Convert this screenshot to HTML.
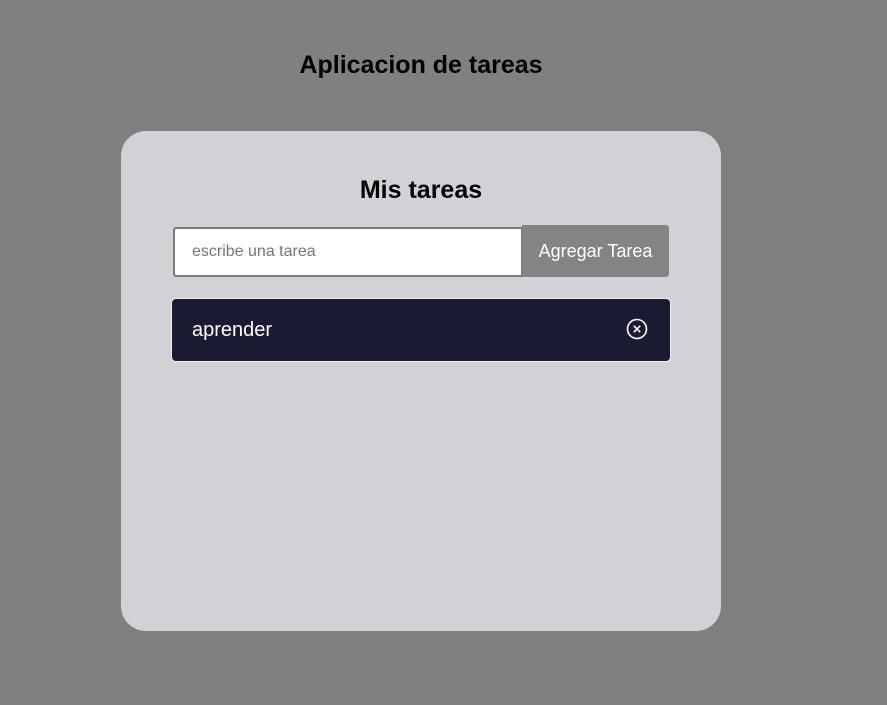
<!DOCTYPE html>
<html><head><meta charset="utf-8"><style>
html,body{margin:0;padding:0;}
body{width:887px;height:705px;background:#808080;font-family:"Liberation Sans",Arial,sans-serif;position:relative;overflow:hidden;}
.t{position:absolute;left:0;width:842px;text-align:center;top:51px;font-size:25px;font-weight:bold;color:#000;margin:0;}
.card{position:absolute;left:121px;top:131px;width:600px;height:500px;background:#d2d1d6;border-radius:25px;}
.h{position:absolute;left:0;width:600px;text-align:center;top:45px;font-size:25px;font-weight:bold;margin:0;}
.inp{position:absolute;left:52px;top:96px;width:346px;height:46px;background:#fff;border:2px solid #7a7a7a;border-radius:3px 0 0 3px;box-sizing:content-box;}
.inp span{position:absolute;left:17px;top:14px;font-size:16px;color:#757575;}
.btn{position:absolute;left:401px;top:94px;width:147px;height:52px;background:#848484;border-radius:0 3px 3px 0;color:#fff;font-size:18px;line-height:52px;text-align:center;}
.task{position:absolute;left:50px;top:167px;width:498px;height:62px;background:#1b1a33;border:1px solid #f0f0f0;border-radius:5px;}
.task span{position:absolute;left:20px;top:20px;color:#fff;font-size:20px;}
.task svg{position:absolute;left:454px;top:19px;}
</style></head><body>
<h1 class="t">Aplicacion de tareas</h1>
<div class="card">
<h2 class="h">Mis tareas</h2>
<div class="inp"><span>escribe una tarea</span></div>
<div class="btn">Agregar Tarea</div>
<div class="task"><span>aprender</span>
<svg width="22" height="22" viewBox="0 0 22 22"><circle cx="11" cy="11" r="9.5" fill="none" stroke="#fff" stroke-width="1.6"/><path d="M7.8 7.8L14.2 14.2M14.2 7.8L7.8 14.2" stroke="#fff" stroke-width="1.6"/></svg>
</div>
</div>
</body></html>
